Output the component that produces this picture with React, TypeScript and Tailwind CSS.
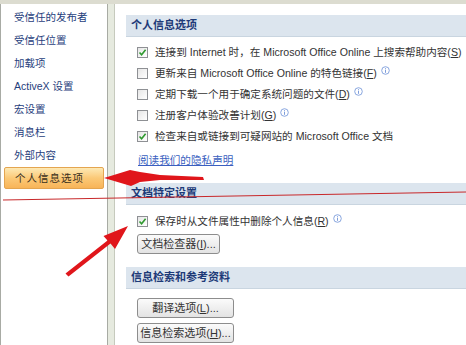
import React from 'react'

const navItems = ['受信任的发布者', '受信任位置', '加载项', 'ActiveX 设置', '宏设置', '消息栏', '外部内容']

function Check({ checked }: { checked?: boolean }) {
    return (
        <div className="w-[11px] h-[11px] shrink-0 border border-[#8e9094] bg-gradient-to-br from-[#e6e6e6] to-white flex items-center justify-center">
            {checked && (
                <svg width="9" height="9" viewBox="0 0 9 9">
                    <path d="M1.5 4.5 L3.6 6.8 L7.6 1.8" fill="none" stroke="#2f9a2f" strokeWidth="1.6" />
                </svg>
            )}
        </div>
    )
}

function Info() {
    return (
        <svg width="9" height="9" viewBox="0 0 9 9" className="ml-[4px] -mt-[7px] shrink-0">
            <circle cx="4.5" cy="4.5" r="3.8" fill="white" stroke="#7d9ddb" strokeWidth="0.9" />
            <rect x="4" y="3.8" width="1" height="3" fill="#7d9ddb" />
            <rect x="4" y="2.2" width="1" height="1" fill="#7d9ddb" />
        </svg>
    )
}

function Row({ checked, children }: { checked?: boolean; children: React.ReactNode }) {
    return (
        <div className="flex items-center h-[21px] pl-[22px]">
            <Check checked={checked} />
            <div className="ml-[7px] flex items-center whitespace-nowrap">{children}</div>
        </div>
    )
}

function Header({ title }: { title: string }) {
    return (
        <div className="ml-[11px] h-[22px] bg-[#dce5ee] border-b border-[#c9d5e0] flex items-center pl-[5px] text-[11px] font-bold text-[#1d3a78]">
            {title}
        </div>
    )
}

function Btn({ w, children }: { w: string; children: React.ReactNode }) {
    return (
        <div className={`ml-[22px] h-[20px] ${w} shrink-0 whitespace-nowrap rounded-[3px] border border-[#8d8d8d] bg-gradient-to-b from-[#fbfbfb] to-[#e3e3e3] flex items-center justify-center text-[11px] text-[#333]`}>
            {children}
        </div>
    )
}

const U = ({ c }: { c: string }) => <span className="underline">{c}</span>

export default function App() {
    return (
        <div className="relative w-[466px] h-[345px] overflow-hidden bg-white font-['Liberation_Sans','Noto_Sans_CJK_SC',sans-serif] text-[10.6px] text-[#333] leading-none">
            <div className="h-[4px] bg-[#dcdcd0]" />
            <div className="flex h-[341px]">
                {/* Left nav */}
                <div className="w-[108px] shrink-0 border-l border-r border-[#a8aba4] pt-[2px] px-[3px] text-[10.5px] whitespace-nowrap">
                    {navItems.map((t) => (
                        <div key={t} className="h-[23px] flex items-center pl-[10px] text-[#1f3e7c]">{t}</div>
                    ))}
                    <div className="h-[22px] flex items-center pl-[10px] rounded-[2px] border border-[#e4a550] bg-gradient-to-b from-[#fde9b4] via-[#fbc977] to-[#f8b458] text-[#3a3020] tracking-[1px]">
                        个人信息选项
                    </div>
                </div>
                <div className="w-[7px] shrink-0 bg-[#e6eadf] border-r border-[#c6cabd]" />

                {/* Main */}
                <div className="flex-1 min-w-0 pt-[11px]">
                    <Header title="个人信息选项" />
                    <div className="mt-[5px]">
                        <Row checked>连接到 Internet 时，在 Microsoft Office Online 上搜索帮助内容(<U c="S" />)</Row>
                        <Row>更新来自 Microsoft Office Online 的特色链接(<U c="F" />)<Info /></Row>
                        <Row>定期下载一个用于确定系统问题的文件(<U c="D" />)<Info /></Row>
                        <Row>注册客户体验改善计划(<U c="G" />)<Info /></Row>
                        <Row checked>检查来自或链接到可疑网站的 Microsoft Office 文档</Row>
                    </div>
                    <div className="mt-[3px] h-[21px] flex items-center pl-[23px] text-[#3a5fc0] underline">阅读我们的隐私声明</div>
                    <div className="mt-[12px]">
                        <Header title="文档特定设置" />
                    </div>
                    <div className="mt-[6px]">
                        <Row checked>保存时从文件属性中删除个人信息(<U c="R" />)<Info /></Row>
                    </div>
                    <div className="mt-[2px]">
                        <Btn w="w-[83px]">文档检查器(<U c="I" />)...</Btn>
                    </div>
                    <div className="mt-[13px]">
                        <Header title="信息检索和参考资料" />
                    </div>
                    <div className="mt-[9px] flex flex-col gap-[5px]">
                        <Btn w="w-[97px]">翻译选项(<U c="L" />)...</Btn>
                        <Btn w="w-[97px]">信息检索选项(<U c="H" />)...</Btn>
                    </div>
                </div>
            </div>

            {/* annotations */}
            <svg className="absolute inset-0 pointer-events-none" width="466" height="345" viewBox="0 0 466 345">
                <line x1="3" y1="200" x2="466" y2="192" stroke="#c8282a" strokeWidth="1" />
                <path d="M104 178 L130 170 L140 172 L160 175 L203 177 L204 180 L160 180 L140 182 L131 186 Z" fill="#e0161b" />
                <path d="M128 226 L103.5 236 L107.5 240.5 L65.5 273.5 L68.5 276.5 L110.5 243.5 L115 249 Z" fill="#e0161b" />
            </svg>
        </div>
    )
}
